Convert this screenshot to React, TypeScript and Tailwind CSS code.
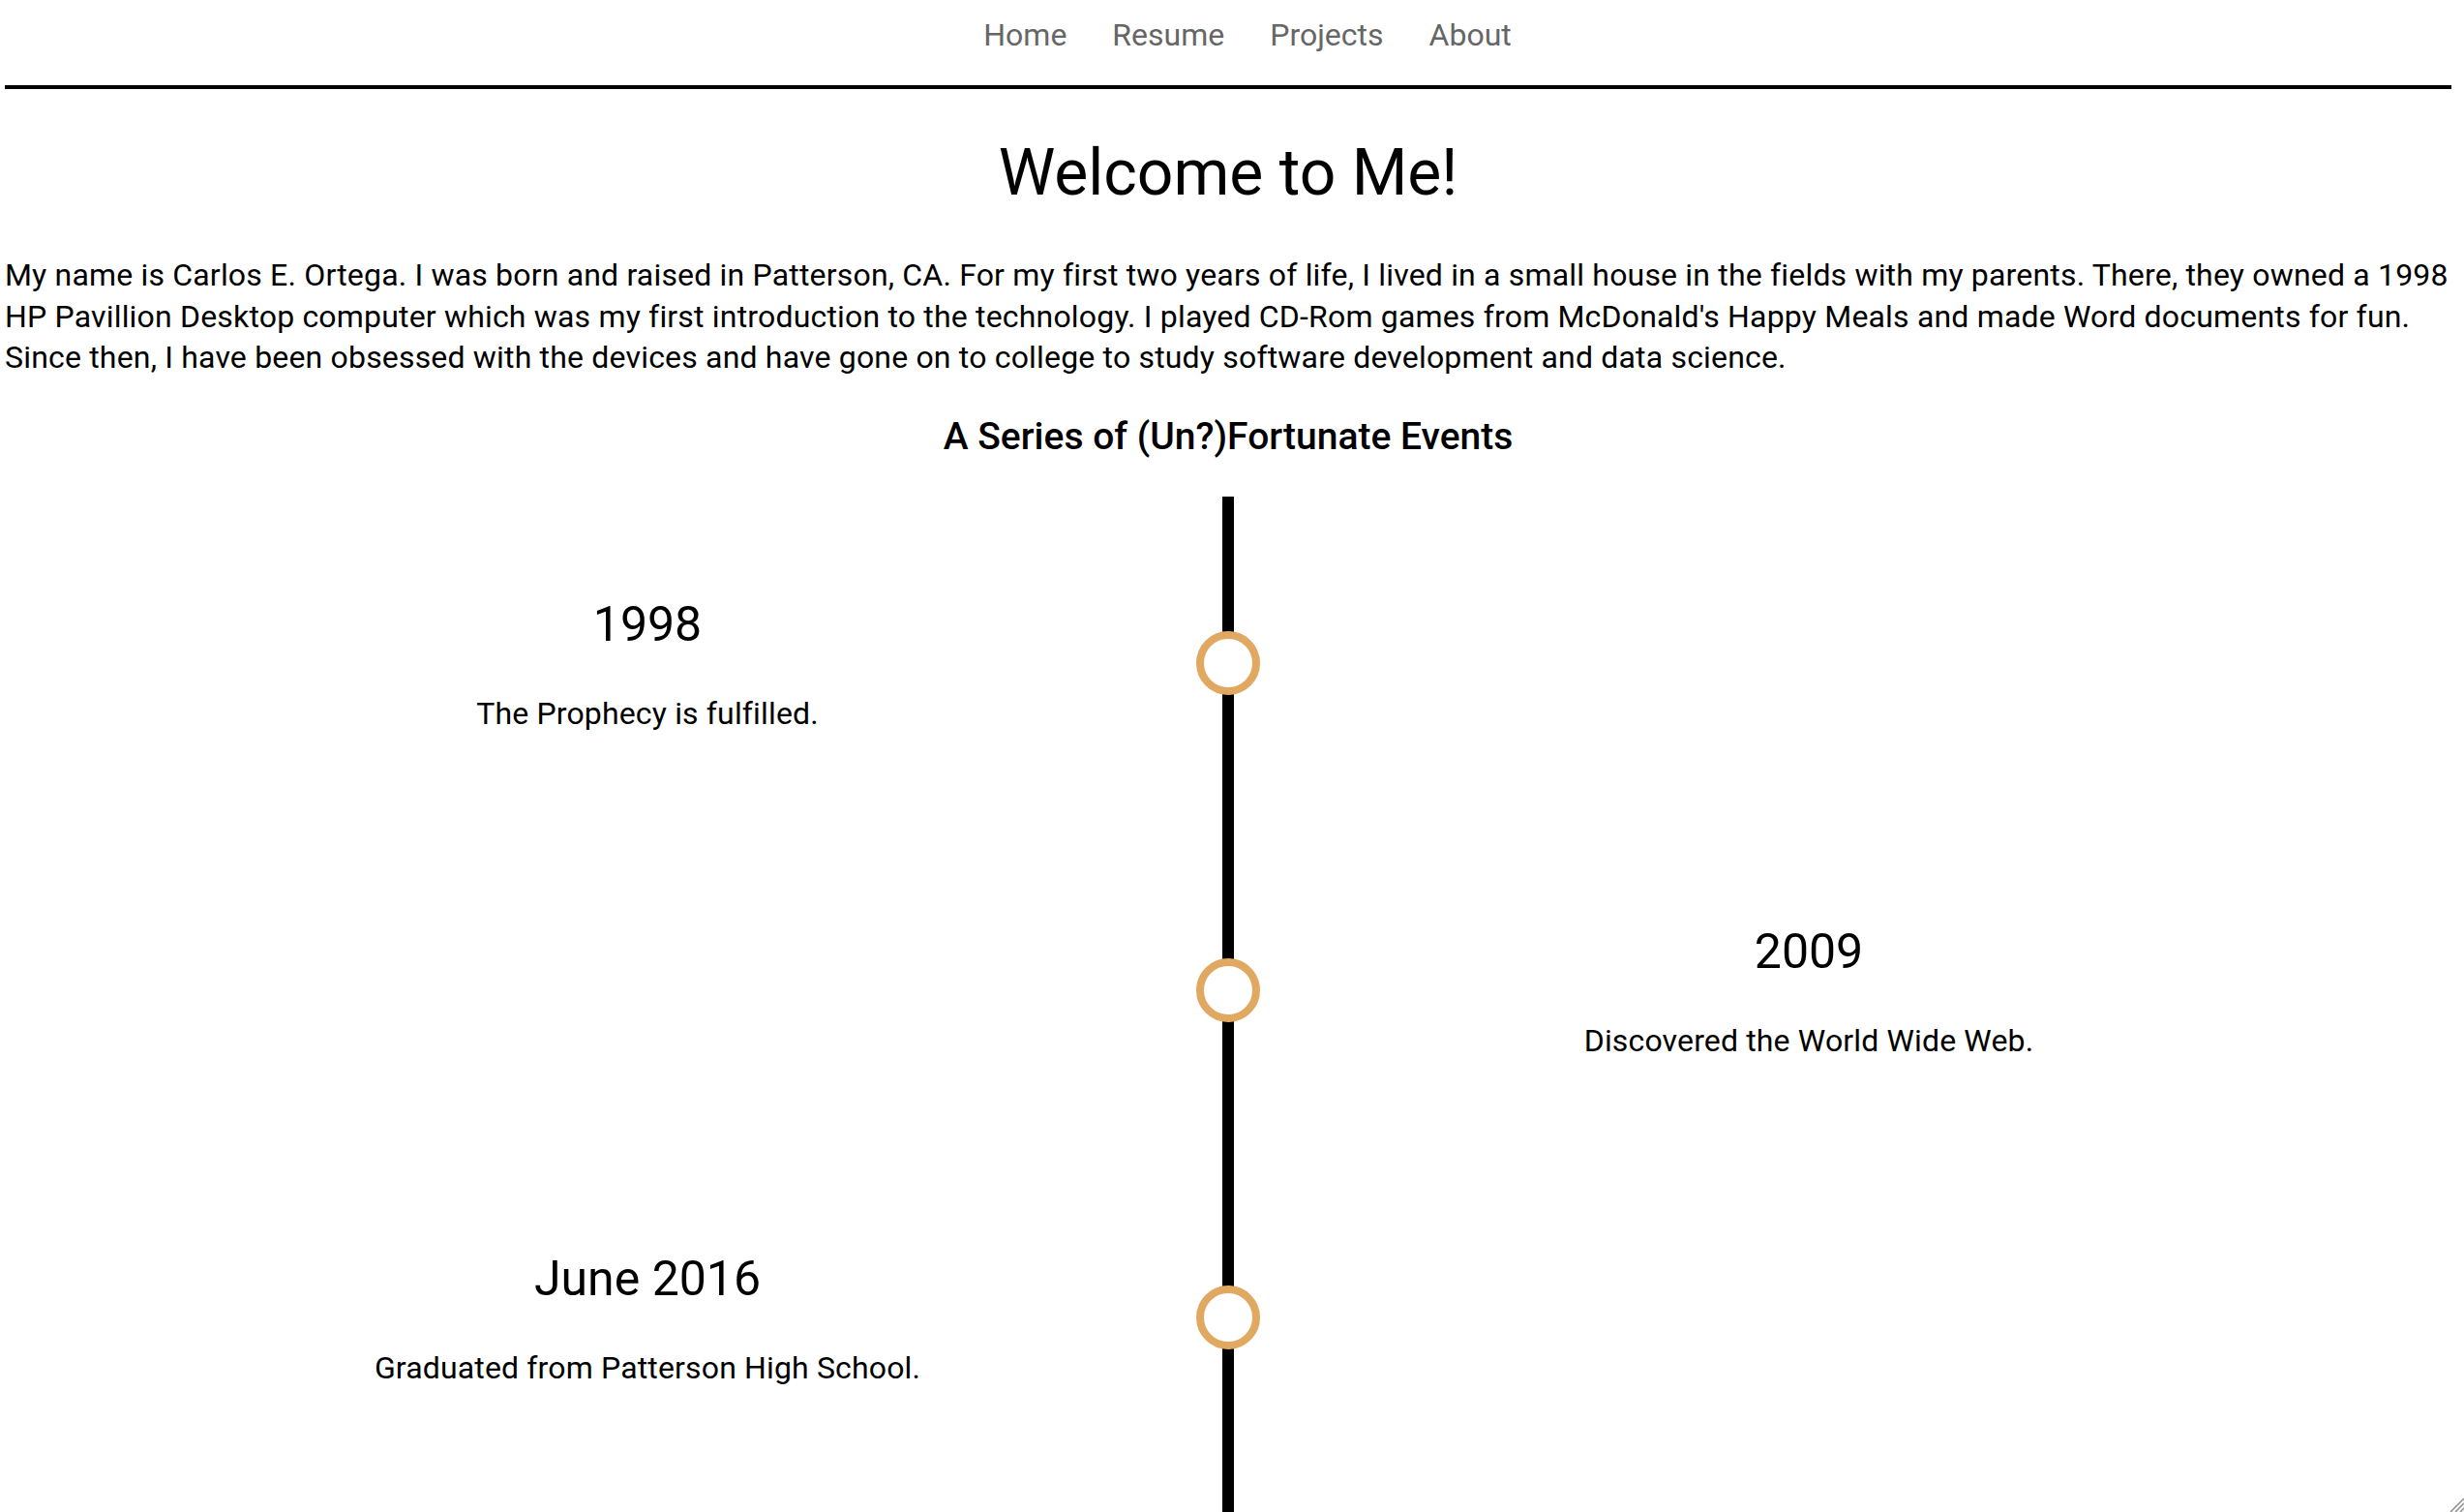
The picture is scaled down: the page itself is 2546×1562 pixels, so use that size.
const NAV = ["Home", "Resume", "Projects", "About"];

const EVENTS = [
  { date: "1998", text: "The Prophecy is fulfilled.", side: "left" },
  { date: "2009", text: "Discovered the World Wide Web.", side: "right" },
  { date: "June 2016", text: "Graduated from Patterson High School.", side: "left" },
  { date: "", text: "", side: "right" },
];

function EventText({ date, text }: { date: string; text: string }) {
  if (!date) return null;
  return (
    <div className="flex flex-col items-center pt-[6px] text-center text-black">
      <h2 className="text-[50px] leading-[56px] font-normal">{date}</h2>
      <p className="mt-[43px] text-[32px] leading-[42px] tracking-[0.15px]">{text}</p>
    </div>
  );
}

export default function App() {
  return (
    <div className="min-h-screen bg-white pl-[5px] pr-[13px] font-['Roboto',sans-serif] text-black">
      {/* nav */}
      <header className="h-[92px] border-b-4 border-black">
        <nav className="flex justify-center gap-[47px] pl-[40px] pt-[16px]">
          {NAV.map((n) => (
            <a key={n} href="#" className="text-[32px] leading-[40px] text-[#666666]">
              {n}
            </a>
          ))}
        </nav>
      </header>

      <h1 className="mt-[49px] text-center text-[66px] leading-[76px] font-normal">Welcome to Me!</h1>

      <p className="mt-[46px] text-[32px] leading-[42.5px] tracking-[0.18px]">
        My name is Carlos E. Ortega. I was born and raised in Patterson, CA. For my first two years of life, I lived
        in a small house in the fields with my parents. There, they owned a 1998 HP Pavillion Desktop computer which
        was my first introduction to the technology. I played CD-Rom games from McDonald's Happy Meals and made Word
        documents for fun. Since then, I have been obsessed with the devices and have gone on to college to study
        software development and data science.
      </p>

      <h3 className="mt-[36px] text-center text-[39px] leading-[48px] font-medium">
        A Series of (Un?)Fortunate Events
      </h3>

      {/* timeline */}
      <div className="relative mt-[38px] pt-[3px] pb-[200px]">
        <div className="absolute left-1/2 top-0 bottom-0 w-[12px] -translate-x-1/2 bg-black" />
        {EVENTS.map((e, i) => (
          <div key={i} className="relative flex h-[338px] items-center justify-center">
            <div className="flex w-[1200px] justify-center">
              {e.side === "left" && <EventText date={e.date} text={e.text} />}
            </div>
            <div className="flex w-[1200px] justify-center">
              {e.side === "right" && <EventText date={e.date} text={e.text} />}
            </div>
            {e.date && (
              <div className="absolute left-1/2 top-1/2 h-[66px] w-[66px] -translate-x-1/2 -translate-y-1/2 rounded-full border-[8px] border-[#e1a862] bg-white" />
            )}
          </div>
        ))}
      </div>

      {/* resize grip */}
      <svg className="fixed bottom-0 right-0 h-[18px] w-[18px]" viewBox="0 0 18 18">
        <path d="M18 4 L4 18 M18 9 L9 18 M18 14 L14 18" stroke="#8a8a8a" strokeWidth="1.5" />
      </svg>
    </div>
  );
}
